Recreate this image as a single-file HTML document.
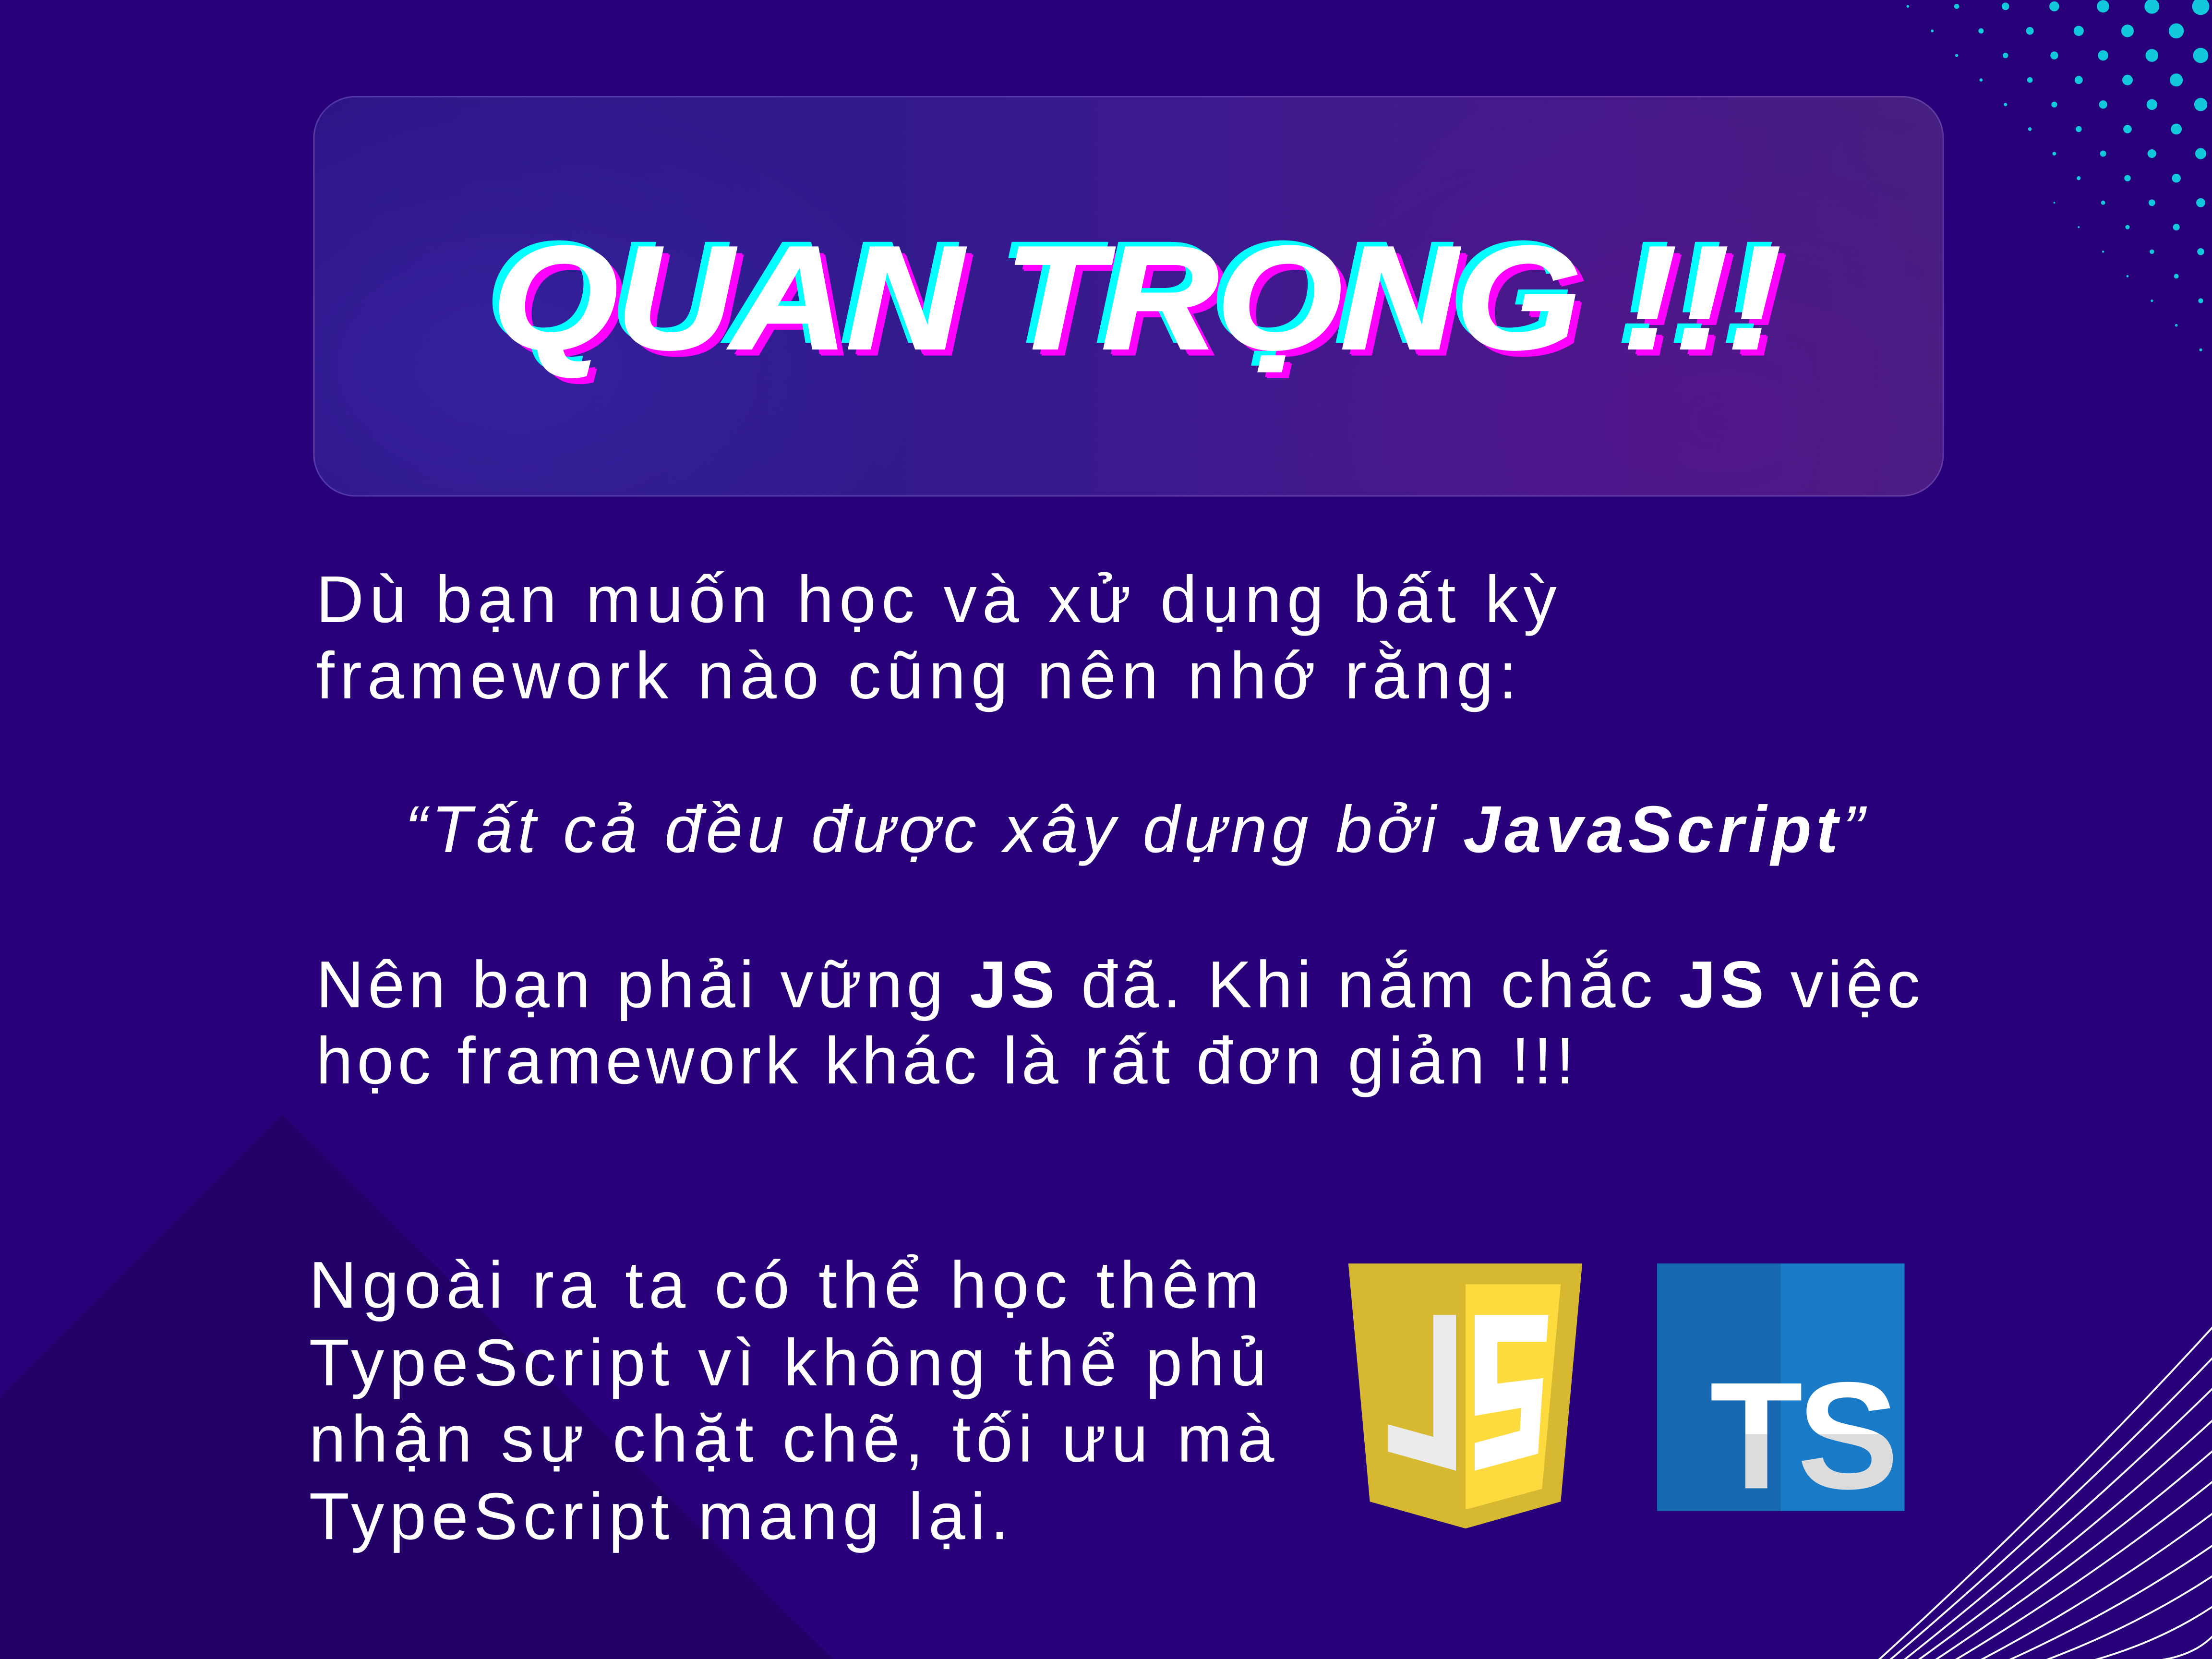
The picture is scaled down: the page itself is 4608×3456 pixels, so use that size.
<!DOCTYPE html>
<html><head><meta charset="utf-8">
<style>
html,body{margin:0;padding:0;width:4608px;height:3456px;overflow:hidden;background:#28007a;}
#w{position:absolute;left:0;top:0;width:1568px;height:1176px;transform:scale(2.93878);transform-origin:0 0;background:#28007a;font-family:"Liberation Sans","DejaVu Sans",sans-serif;color:#fff;}
svg.bg{position:absolute;left:0;top:0;}
.card{position:absolute;left:222px;top:68px;width:1156px;height:284px;border-radius:30px;box-sizing:border-box;border:1px solid rgba(150,120,220,0.35);
background:
radial-gradient(ellipse 300px 200px at 130px 190px,rgba(60,40,170,0.6),transparent),
radial-gradient(ellipse 400px 250px at 1000px 230px,rgba(90,20,140,0.55),transparent),
linear-gradient(90deg,#2d1588 0%,#301a8c 30%,#3d1a8e 55%,#46198a 80%,#45207f 100%);}
.title{position:absolute;left:349px;top:160px;font-size:104px;font-weight:bold;font-style:italic;white-space:nowrap;letter-spacing:-1px;line-height:1;transform:scaleX(1.1);transform-origin:0 0;
text-shadow:-5px -4px 0 #00ffff,4px 4px 0 #ff00ff,-4px -4px 0 #00ffff,5px 5px 0 #ff00ff;-webkit-text-stroke:1.5px #fff;}
.t{position:absolute;white-space:nowrap;font-size:47px;letter-spacing:3px;line-height:54px;}
b{font-weight:bold}
.q{font-style:italic}
</style></head><body><div id="w">
<svg class="bg" width="1568" height="1176" viewBox="0 0 1568 1176">
<polygon points="0,990 200,790 590,1176 0,1176" fill="#220068"/>
<g id="dots" fill="#12c8dc"></g>
<g id="lines" stroke="#fff" stroke-width="1.3" fill="none"></g>
</svg>
<div class="card"></div>
<div class="title">QUAN TRỌNG !!!</div>
<div class="t" style="left:224px;top:398px;letter-spacing:3.8px;">Dù bạn muốn học và xử dụng bất kỳ<br>framework nào cũng nên nhớ rằng:</div>
<div class="t q" style="left:287px;top:561px;letter-spacing:3.1px;">“Tất cả đều được xây dựng bởi <b>JavaScript</b>”</div>
<div class="t" style="left:224px;top:671px;letter-spacing:2.8px;">Nên bạn phải vững <b>JS</b> đã. Khi nắm chắc <b>JS</b> việc<br>học framework khác là rất đơn giản !!!</div>
<div class="t" style="left:219px;top:884px;line-height:54.5px;letter-spacing:3.7px;">Ngoài ra ta có thể học thêm<br>TypeScript vì không thể phủ<br>nhận sự chặt chẽ, tối ưu mà<br>TypeScript mang lại.</div>
<svg class="bg" width="1568" height="1176" viewBox="0 0 1568 1176">
<g transform="matrix(0.4015 0 0 0.1888 935.7 877.9)">
<polygon points="50,94 463,94 425,988 257,1089 88,988" fill="#d6b931"/>
<polygon points="257,172 425,172 392,940 257,1018" fill="#fddb3e"/>
<polygon points="200,287 240,287 240,872 120,800 120,698 200,745" fill="#ebebeb"/>
<polygon points="273,287 403,287 400,388 313,388 313,545 394,524 385,808 273,872 273,768 353,722 355,636 273,666" fill="#fff"/>
<rect x="595" y="94" width="218" height="929" fill="#1669b0"/>
<rect x="813" y="94" width="219" height="929" fill="#1a7bc8"/>
</g>
<defs><linearGradient id="tg" x1="0" y1="975" x2="0" y2="1058" gradientUnits="userSpaceOnUse"><stop offset="0.5" stop-color="#fff"/><stop offset="0.5" stop-color="#dcdcdc"/></linearGradient></defs>
<text x="1212" y="1055" font-family="Liberation Sans,sans-serif" font-weight="bold" font-size="108" fill="url(#tg)" letter-spacing="-4">TS</text>
</svg>
<script>
(function(){
var g=document.getElementById('dots'),s='';
for(var r=0;r<15;r++){var yd=28+108.3*r;
 for(var j=0;j<8;j++){var xd=165+112.6*(2*j+(r%2));if(xd>1560)continue;
  var rr=39-0.024*(1520-xd)-0.021*yd; if(rr<3.5)continue;
  var x=(3900+0.4515*xd)/2.93878,y=0.472*yd/2.93878;
  s+='<circle cx="'+x.toFixed(1)+'" cy="'+y.toFixed(1)+'" r="'+(rr*0.16).toFixed(2)+'"/>';}}
g.innerHTML=s;
var bx=[985,1005,1030,1055,1085,1120,1165,1215,1280,1365,1480],ey=[330,445,560,680,795,910,1030,1150,1265,1380,1490],l='';
for(var i=0;i<bx.length;i++){var x0=(2750+1.18*bx[i])/2.93878,y1=(2580+0.555*ey[i])/2.93878;
 var cx=(x0+1568)/2+6,cy=(1176+y1)/2+6;
 l+='<path d="M'+x0.toFixed(1)+' 1177 Q'+cx.toFixed(1)+' '+cy.toFixed(1)+' 1569 '+y1.toFixed(1)+'"/>';}
document.getElementById('lines').innerHTML=l;
})();
</script>
</div></body></html>
